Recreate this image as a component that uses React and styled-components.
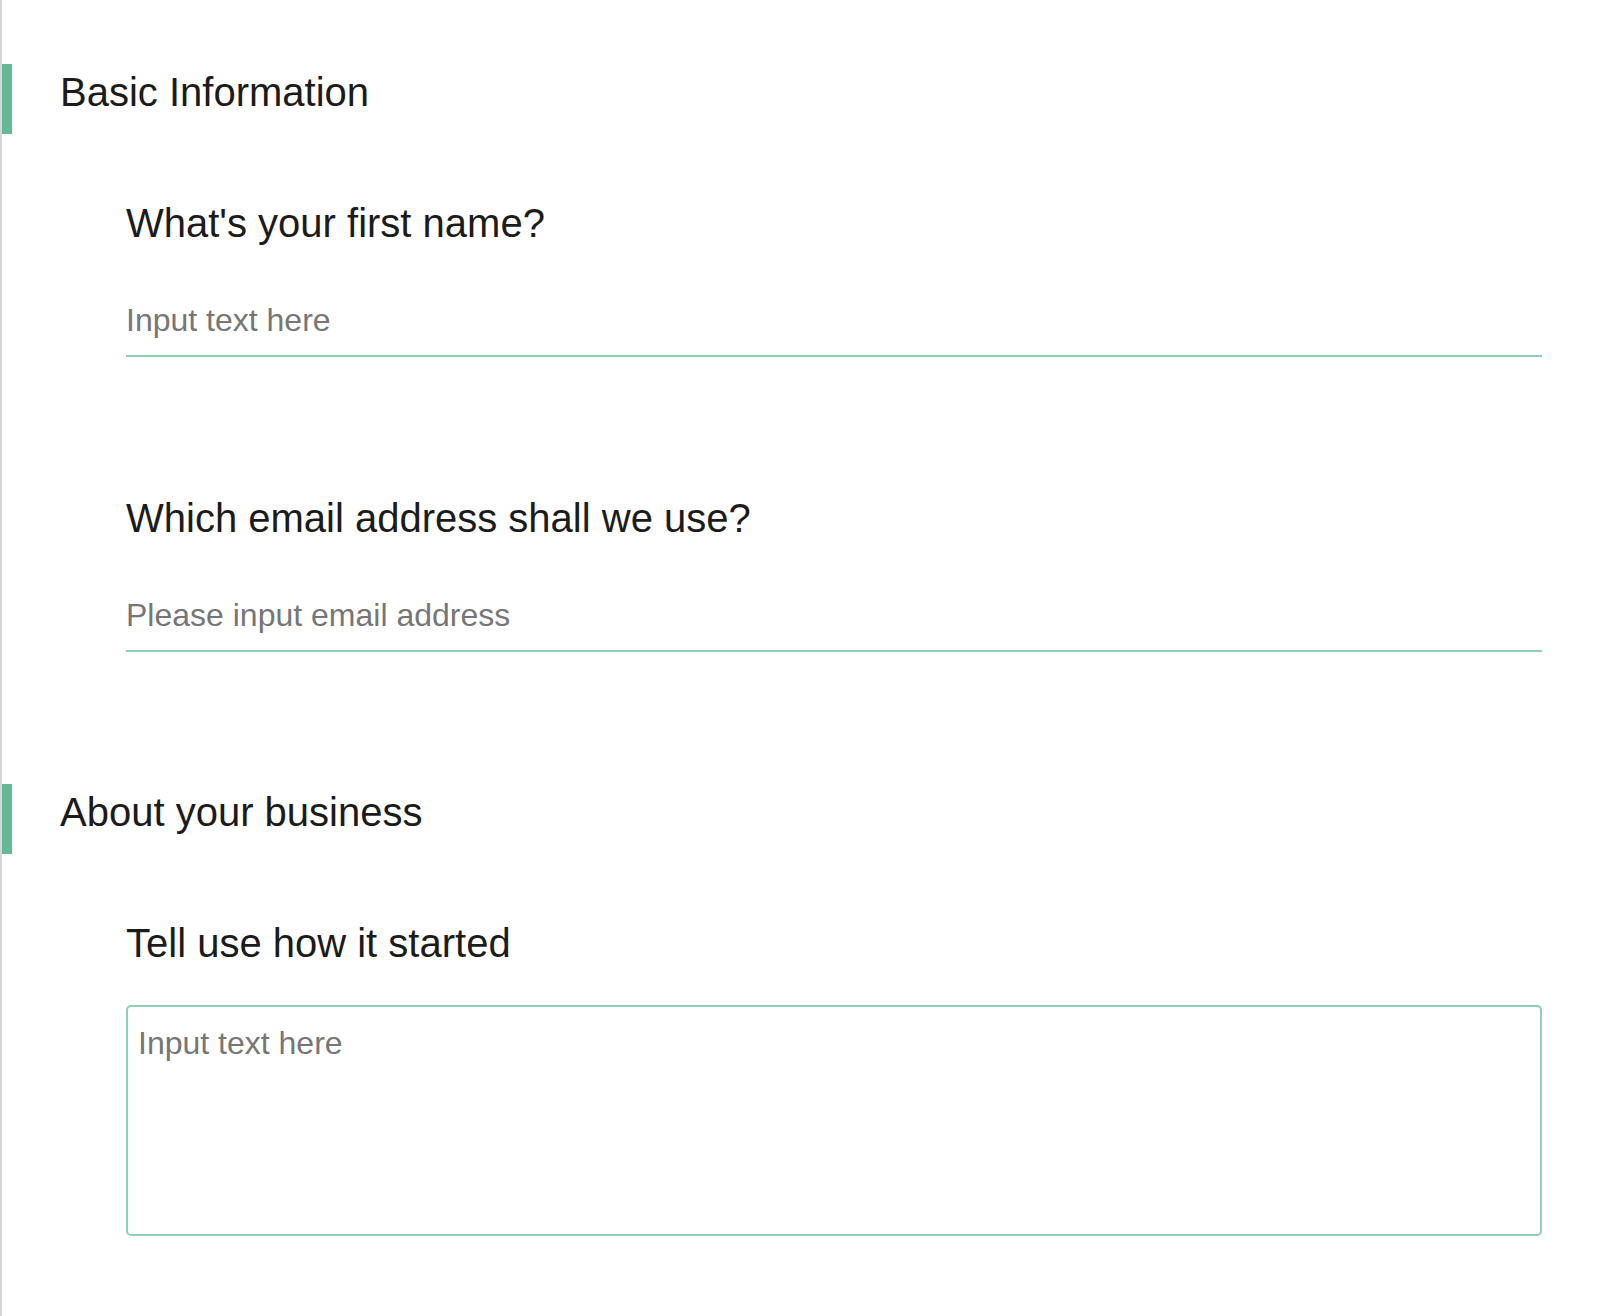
import styled, { createGlobalStyle } from 'styled-components'

const GlobalStyle = createGlobalStyle`
    * {
        box-sizing: border-box;
    }

    body {
        margin: 0;
        background-color: white;
        font-family: "Liberation Sans", Arial, sans-serif;
        color: #1b1b1b;
    }
`

const sections = [
    {
        title: 'Basic Information',
        questions: [
            { label: "What's your first name?", placeholder: 'Input text here', type: 'text' },
            { label: 'Which email address shall we use?', placeholder: 'Please input email address', type: 'email' },
        ],
    },
    {
        title: 'About your business',
        questions: [
            { label: 'Tell use how it started', placeholder: 'Input text here', multiline: true },
        ],
    },
]

const Question = ({ data }) => (
    <Field>
        <Label>{data.label}</Label>
        {data.multiline
            ? <TextBox placeholder={data.placeholder} />
            : <LineInput type={data.type} placeholder={data.placeholder} />}
    </Field>
)

const App = () => (
    <>
        <GlobalStyle />
        <Page>
            {sections.map(section => (
                <Section key={section.title}>
                    <SectionHeader>
                        <h2>{section.title}</h2>
                    </SectionHeader>
                    <Questions>
                        {section.questions.map(q => <Question key={q.label} data={q} />)}
                    </Questions>
                </Section>
            ))}
        </Page>
    </>
)

export default App

const Page = styled.main`
    min-height: 1316px;
    padding: 64px 58px 0 0;
    border-left: 2px solid #d6d6db;
    display: flex;
    flex-direction: column;
    gap: 132px;
`

const Section = styled.section`
    display: flex;
    flex-direction: column;
    gap: 66px;
`

const SectionHeader = styled.header`
    height: 70px;
    padding-left: 48px;
    border-left: 10px solid #62b994;

    h2 {
        margin: 0;
        font-size: 40px;
        font-weight: 400;
        line-height: 56px;
    }
`

const Questions = styled.div`
    padding-left: 124px;
    display: flex;
    flex-direction: column;
    gap: 138px;
`

const Field = styled.div`
    display: flex;
    flex-direction: column;
    gap: 39px;
`

const Label = styled.label`
    font-size: 40px;
    line-height: 46px;
`

const LineInput = styled.input`
    width: 100%;
    height: 72px;
    padding: 0;
    border: none;
    border-bottom: 2px solid #8fcfb3;
    outline: none;
    font-family: inherit;
    font-size: 32px;
    color: #1b1b1b;

    &::placeholder {
        color: #767676;
    }
`

const TextBox = styled.textarea`
    width: 100%;
    height: 231px;
    padding: 12px 10px;
    border: 2px solid #8fcfb3;
    border-radius: 5px;
    outline: none;
    resize: none;
    font-family: inherit;
    font-size: 32px;
    line-height: 48px;
    color: #1b1b1b;

    &::placeholder {
        color: #767676;
    }
`
